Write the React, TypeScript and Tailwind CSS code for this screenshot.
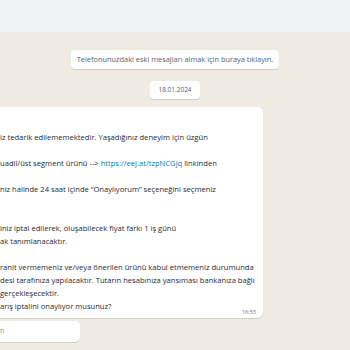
const lines: { text: React.ReactNode; cls: string }[] = [
  { text: "", cls: "" },
  { text: "iz tedarik edilememektedir. Yaşadığınız deneyim için üzgün", cls: "" },
  { text: "", cls: "" },
  {
    text: (
      <>
        uadil/üst segment ürünü --&gt;{" "}
        <span className="text-[#027eb5]">https://eej.at/tzpNCGjq</span> linkinden
      </>
    ),
    cls: "",
  },
  { text: "", cls: "" },
  { text: "niz halinde 24 saat içinde \u201cOnaylıyorum\u201d seçeneğini seçmeniz", cls: "" },
  { text: "", cls: "" },
  { text: "", cls: "" },
  { text: "iniz iptal edilerek, oluşabilecek fiyat farkı 1 iş günü", cls: "" },
  { text: "ak tanımlanacaktır.", cls: "" },
  { text: "", cls: "" },
  { text: "ranit vermemeniz ve/veya önerilen ürünü kabul etmemeniz durumunda", cls: "" },
  { text: "desi tarafınıza yapılacaktır. Tutarın hesabınıza yansıması bankanıza bağlı", cls: "" },
  { text: "gerçekleşecektir.", cls: "" },
];

export default function App() {
  return (
    <div className="flex h-[350px] w-[350px] flex-col overflow-hidden font-['Open_Sans',sans-serif]">
      <div className="h-[32px] shrink-0 bg-[#f0f2f5]" />

      <div className="flex flex-1 flex-col items-center bg-[#efeae2] pt-[18px]">
        <div className="flex h-[19px] w-[208px] items-center justify-center rounded-[4px] bg-white text-[7.4px] text-[#54656f] shadow-[0_1px_0.5px_rgba(11,20,26,0.13)]">
          Telefonunuzdaki eski mesajları almak için buraya tıklayın.
        </div>

        <div className="mt-[12px] flex h-[18px] w-[50px] items-center justify-center rounded-[4px] bg-white text-[6.5px] text-[#54656f] shadow-[0_1px_0.5px_rgba(11,20,26,0.13)]">
          18.01.2024
        </div>

        <div className="-ml-[12px] mt-[8px] w-[275px] self-start rounded-[6px] bg-white pb-[5px] pl-[12px] pt-[11px] text-[7.6px] text-[#1f2a30] shadow-[0_1px_0.5px_rgba(11,20,26,0.13)]">
          {lines.map((l, i) => (
            <div key={i} className={`h-[13px] whitespace-nowrap leading-[13px] ${l.cls}`}>
              {l.text}
            </div>
          ))}
          <div className="flex h-[13px] items-end justify-between pr-[7px] leading-[13px]">
            <span className="whitespace-nowrap">arış iptalini onaylıyor musunuz?</span>
            <span className="translate-y-[3px] text-[5.5px] leading-[8px] text-[#667781]">16:53</span>
          </div>
        </div>

        <div className="-ml-[20px] mt-[3px] flex h-[21px] w-[100px] items-center self-start rounded-[5px] bg-white pl-[20px] text-[7px] text-[#8696a0] shadow-[0_1px_0.5px_rgba(11,20,26,0.13)]">
          n
        </div>
      </div>
    </div>
  );
}
